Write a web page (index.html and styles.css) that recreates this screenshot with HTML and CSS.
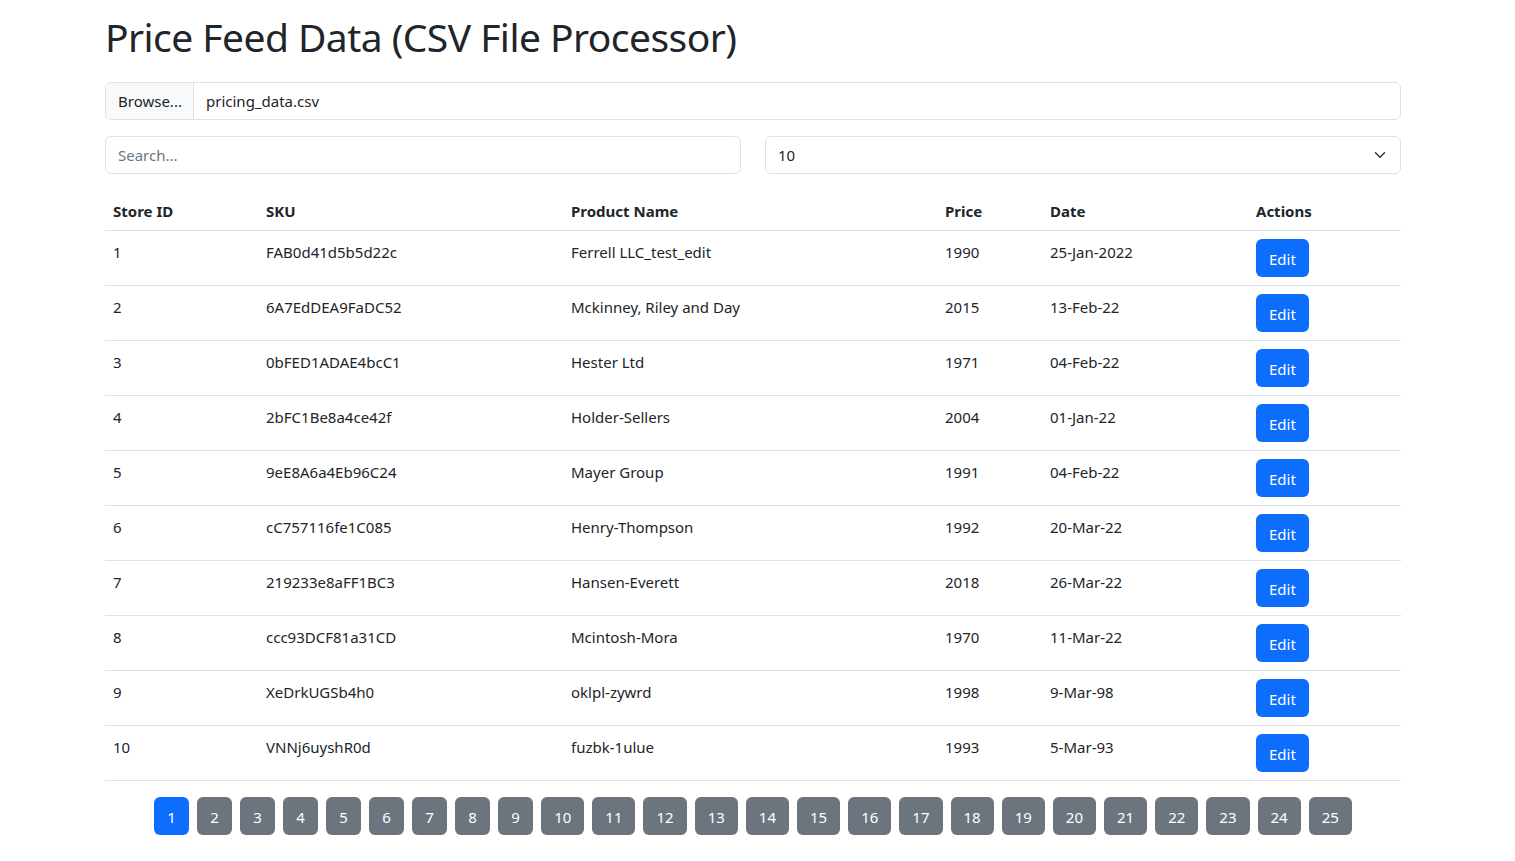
FILE: index.html
```html
<!DOCTYPE html>
<html lang="en">
<head>
<meta charset="utf-8">
<title>Price Feed Data</title>
<link rel="stylesheet" href="styles.css">
</head>
<body>
<div class="container">
  <h1 class="title">Price Feed Data (CSV File Processor)</h1>
  <div class="file-input">
    <span class="file-btn">Browse...</span>
    <span class="file-name">pricing_data.csv</span>
  </div>
  <div class="controls">
    <div class="control search">Search...</div>
    <div class="control select">
      <span>10</span>
      <svg class="chev" width="16" height="12" viewBox="0 0 16 16"><path d="m2 5 6 6 6-6" fill="none" stroke="#343a40" stroke-width="2" stroke-linecap="round" stroke-linejoin="round"/></svg>
    </div>
  </div>
  <table class="table">
    <colgroup>
      <col class="c1"><col class="c2"><col class="c3"><col class="c4"><col class="c5"><col class="c6">
    </colgroup>
    <thead>
      <tr><th>Store ID</th><th>SKU</th><th>Product Name</th><th>Price</th><th>Date</th><th>Actions</th></tr>
    </thead>
    <tbody>
      <tr><td>1</td><td>FAB0d41d5b5d22c</td><td>Ferrell LLC_test_edit</td><td>1990</td><td>25-Jan-2022</td><td><span class="btn-edit">Edit</span></td></tr>
      <tr><td>2</td><td>6A7EdDEA9FaDC52</td><td>Mckinney, Riley and Day</td><td>2015</td><td>13-Feb-22</td><td><span class="btn-edit">Edit</span></td></tr>
      <tr><td>3</td><td>0bFED1ADAE4bcC1</td><td>Hester Ltd</td><td>1971</td><td>04-Feb-22</td><td><span class="btn-edit">Edit</span></td></tr>
      <tr><td>4</td><td>2bFC1Be8a4ce42f</td><td>Holder-Sellers</td><td>2004</td><td>01-Jan-22</td><td><span class="btn-edit">Edit</span></td></tr>
      <tr><td>5</td><td>9eE8A6a4Eb96C24</td><td>Mayer Group</td><td>1991</td><td>04-Feb-22</td><td><span class="btn-edit">Edit</span></td></tr>
      <tr><td>6</td><td>cC757116fe1C085</td><td>Henry-Thompson</td><td>1992</td><td>20-Mar-22</td><td><span class="btn-edit">Edit</span></td></tr>
      <tr><td>7</td><td>219233e8aFF1BC3</td><td>Hansen-Everett</td><td>2018</td><td>26-Mar-22</td><td><span class="btn-edit">Edit</span></td></tr>
      <tr><td>8</td><td>ccc93DCF81a31CD</td><td>Mcintosh-Mora</td><td>1970</td><td>11-Mar-22</td><td><span class="btn-edit">Edit</span></td></tr>
      <tr><td>9</td><td>XeDrkUGSb4h0</td><td>oklpl-zywrd</td><td>1998</td><td>9-Mar-98</td><td><span class="btn-edit">Edit</span></td></tr>
      <tr><td>10</td><td>VNNj6uyshR0d</td><td>fuzbk-1ulue</td><td>1993</td><td>5-Mar-93</td><td><span class="btn-edit">Edit</span></td></tr>
    </tbody>
  </table>
  <div class="pagination">
    <span class="page active">1</span><span class="page">2</span><span class="page">3</span><span class="page">4</span><span class="page">5</span><span class="page">6</span><span class="page">7</span><span class="page">8</span><span class="page">9</span><span class="page">10</span><span class="page">11</span><span class="page">12</span><span class="page">13</span><span class="page">14</span><span class="page">15</span><span class="page">16</span><span class="page">17</span><span class="page">18</span><span class="page">19</span><span class="page">20</span><span class="page">21</span><span class="page">22</span><span class="page">23</span><span class="page">24</span><span class="page">25</span>
  </div>
</div>
</body>
</html>
```
FILE: styles.css
```css
html, body {
  margin: 0;
  padding: 0;
  background: #fff;
}
body {
  font-family: "Noto Sans", "Open Sans", sans-serif;
  font-size: 16px;
  line-height: 24px;
  color: #212529;
}
.container {
  width: 1296px;
  margin-left: 105px;
  padding-top: 13px;
}
.title {
  margin: 0 0 21px 0;
  font-size: 39px;
  line-height: 48px;
  font-weight: 400;
  letter-spacing: -0.55px;
}
.file-input {
  display: flex;
  height: 38px;
  box-sizing: border-box;
  border: 1px solid #dee2e6;
  border-radius: 6px;
  overflow: hidden;
  font-size: 15px;
}
.file-btn {
  display: flex;
  align-items: center;
  padding: 0 12px;
  width: 88px;
  box-sizing: border-box;
  background: #f8f9fa;
  border-right: 1px solid #dee2e6;
}
.file-name {
  display: flex;
  align-items: center;
  padding-left: 12px;
}
.controls {
  display: flex;
  gap: 24px;
  margin-top: 16px;
}
.control {
  flex: 1;
  height: 38px;
  box-sizing: border-box;
  border: 1px solid #dee2e6;
  border-radius: 6px;
  display: flex;
  align-items: center;
  padding: 0 12px;
  font-size: 15px;
}
.search {
  color: #6c757d;
}
.select {
  justify-content: space-between;
}
.chev {
  margin-right: 0;
}
.table {
  width: 100%;
  margin-top: 16px;
  border-collapse: collapse;
  table-layout: fixed;
  font-size: 15px;
}
.c1 { width: 153px; }
.c2 { width: 305px; }
.c3 { width: 374px; }
.c4 { width: 105px; }
.c5 { width: 206px; }
.c6 { width: 153px; }
.table th, .table td {
  padding: 9px 8px 7px 8px;
  text-align: left;
  vertical-align: top;
  border-bottom: 1px solid #dee2e6;
  line-height: 24px;
}
.table td:last-child {
  padding-top: 8px;
  padding-bottom: 8px;
}
.table th {
  font-weight: 700;
}
.btn-edit {
  display: inline-block;
  background: #0d6efd;
  color: #fff;
  border-radius: 6px;
  padding: 8px 13px 6px 13px;
  line-height: 24px;
  font-size: 15px;
}
.pagination {
  display: flex;
  justify-content: center;
  gap: 8px;
  margin-top: 16px;
}
.page {
  display: inline-block;
  height: 38px;
  box-sizing: border-box;
  padding: 8px 13px 6px 13px;
  line-height: 24px;
  background: #6c757d;
  color: #fff;
  border-radius: 6px;
  font-size: 15px;
  min-width: 35px;
  text-align: center;
}
.page.active {
  background: #0d6efd;
}
```
